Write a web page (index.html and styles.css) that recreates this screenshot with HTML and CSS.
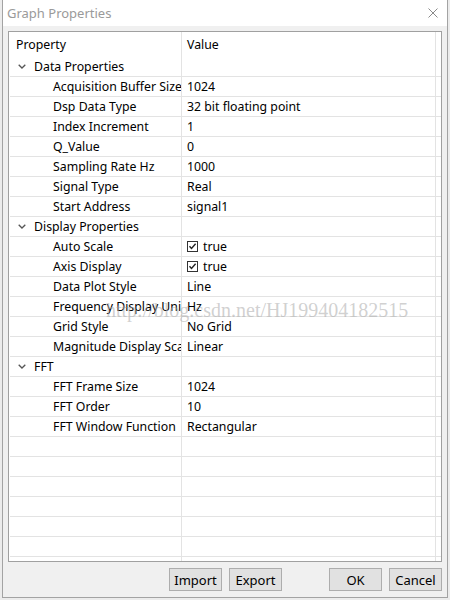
FILE: index.html
```html
<!doctype html>
<html lang="en">
  <head>
    <meta charset="UTF-8" />
    <title>Graph Properties</title>
    <link rel="stylesheet" href="styles.css">
  </head>
  <body>
    <div class="window">
      <div class="titlebar">
        <span class="title">Graph Properties</span>
        <svg class="close" width="10" height="10" viewBox="0 0 10 10">
          <path d="M0.5 0.5 L9.5 9.5 M9.5 0.5 L0.5 9.5" stroke="#8a8a8a" stroke-width="1" fill="none" />
        </svg>
      </div>

      <div class="content">
        <div class="grid">
          <div class="row head">
            <div class="cell name">Property</div>
            <div class="cell value">Value</div>
            <div class="cell fill"></div>
          </div>

          <!-- Data Properties -->
          <div class="row cat">
            <div class="cell name"><svg class="chev" width="8" height="5" viewBox="0 0 8 5"><path d="M0.7 0.7 L4 4 L7.3 0.7" stroke="#555" stroke-width="1.3" fill="none" /></svg>Data Properties</div>
            <div class="cell value"></div>
            <div class="cell fill"></div>
          </div>
          <div class="row"><div class="cell name">Acquisition Buffer Size</div><div class="cell value">1024</div><div class="cell fill"></div></div>
          <div class="row"><div class="cell name">Dsp Data Type</div><div class="cell value">32 bit floating point</div><div class="cell fill"></div></div>
          <div class="row"><div class="cell name">Index Increment</div><div class="cell value">1</div><div class="cell fill"></div></div>
          <div class="row"><div class="cell name">Q_Value</div><div class="cell value">0</div><div class="cell fill"></div></div>
          <div class="row"><div class="cell name">Sampling Rate Hz</div><div class="cell value">1000</div><div class="cell fill"></div></div>
          <div class="row"><div class="cell name">Signal Type</div><div class="cell value">Real</div><div class="cell fill"></div></div>
          <div class="row"><div class="cell name">Start Address</div><div class="cell value">signal1</div><div class="cell fill"></div></div>

          <!-- Display Properties -->
          <div class="row cat">
            <div class="cell name"><svg class="chev" width="8" height="5" viewBox="0 0 8 5"><path d="M0.7 0.7 L4 4 L7.3 0.7" stroke="#555" stroke-width="1.3" fill="none" /></svg>Display Properties</div>
            <div class="cell value"></div>
            <div class="cell fill"></div>
          </div>
          <div class="row">
            <div class="cell name">Auto Scale</div>
            <div class="cell value"><svg class="check" width="11" height="11" viewBox="0 0 11 11"><rect x="0.5" y="0.5" width="10" height="10" fill="#fff" stroke="#333" /><path d="M2.5 5.2 L4.5 7.4 L8.6 2.8" stroke="#222" stroke-width="1.4" fill="none" /></svg>true</div>
            <div class="cell fill"></div>
          </div>
          <div class="row">
            <div class="cell name">Axis Display</div>
            <div class="cell value"><svg class="check" width="11" height="11" viewBox="0 0 11 11"><rect x="0.5" y="0.5" width="10" height="10" fill="#fff" stroke="#333" /><path d="M2.5 5.2 L4.5 7.4 L8.6 2.8" stroke="#222" stroke-width="1.4" fill="none" /></svg>true</div>
            <div class="cell fill"></div>
          </div>
          <div class="row"><div class="cell name">Data Plot Style</div><div class="cell value">Line</div><div class="cell fill"></div></div>
          <div class="row"><div class="cell name">Frequency Display Unit</div><div class="cell value">Hz</div><div class="cell fill"></div></div>
          <div class="row"><div class="cell name">Grid Style</div><div class="cell value">No Grid</div><div class="cell fill"></div></div>
          <div class="row"><div class="cell name">Magnitude Display Scale</div><div class="cell value">Linear</div><div class="cell fill"></div></div>

          <!-- FFT -->
          <div class="row cat">
            <div class="cell name"><svg class="chev" width="8" height="5" viewBox="0 0 8 5"><path d="M0.7 0.7 L4 4 L7.3 0.7" stroke="#555" stroke-width="1.3" fill="none" /></svg>FFT</div>
            <div class="cell value"></div>
            <div class="cell fill"></div>
          </div>
          <div class="row"><div class="cell name">FFT Frame Size</div><div class="cell value">1024</div><div class="cell fill"></div></div>
          <div class="row"><div class="cell name">FFT Order</div><div class="cell value">10</div><div class="cell fill"></div></div>
          <div class="row"><div class="cell name">FFT Window Function</div><div class="cell value">Rectangular</div><div class="cell fill"></div></div>

          <!-- empty rows -->
          <div class="row"><div class="cell name"></div><div class="cell value"></div><div class="cell fill"></div></div>
          <div class="row"><div class="cell name"></div><div class="cell value"></div><div class="cell fill"></div></div>
          <div class="row"><div class="cell name"></div><div class="cell value"></div><div class="cell fill"></div></div>
          <div class="row"><div class="cell name"></div><div class="cell value"></div><div class="cell fill"></div></div>
          <div class="row"><div class="cell name"></div><div class="cell value"></div><div class="cell fill"></div></div>
          <div class="row"><div class="cell name"></div><div class="cell value"></div><div class="cell fill"></div></div>
          <div class="row"><div class="cell name"></div><div class="cell value"></div><div class="cell fill"></div></div>
        </div>

        <div class="buttons">
          <button class="btn">Import</button>
          <button class="btn">Export</button>
          <button class="btn ok">OK</button>
          <button class="btn">Cancel</button>
        </div>
      </div>

      <div class="watermark">http://blog.csdn.net/HJ199404182515</div>
    </div>
  </body>
</html>
```

FILE: styles.css
```css
* {
  margin: 0;
  padding: 0;
  box-sizing: border-box;
}

body {
  font-family: "Noto Sans", "Noto Sans CJK SC", sans-serif;
  font-size: 12.3px;
  color: #000;
  background: #ececec;
  width: 450px;
  height: 600px;
  overflow: hidden;
}

.window {
  position: relative;
  width: 446px;
  height: 598px;
  margin-left: 2px;
  border: 1px solid #a3a3a3;
  border-top: none;
  background: #f0f0f0;
}

.titlebar {
  height: 26px;
  background: #fff;
  display: flex;
  align-items: center;
  justify-content: space-between;
  padding: 0 9px 0 4px;
}

.title {
  font-size: 13px;
  color: #9a9a9a;
}

.close {
  display: block;
}

.content {
  padding: 5px 5px 0;
}

.grid {
  height: 531px;
  border: 1px solid #a0a0a0;
  background: #fff;
  padding-left: 1px;
  overflow: hidden;
}

.row {
  display: flex;
  height: 20px;
  border-bottom: 1px solid #e3e3e3;
}

.row.head {
  height: 25px;
  border-bottom: none;
}

.cell {
  display: flex;
  align-items: center;
  white-space: nowrap;
  overflow: hidden;
}

.cell.name {
  width: 172px;
  padding-left: 43px;
  border-right: 1px solid #e3e3e3;
}

.cell.value {
  width: 254px;
  padding-left: 5px;
  border-right: 1px solid #e3e3e3;
}

.cell.fill {
  width: 5px;
}

.head .cell.name {
  padding-left: 6px;
}

.cat .cell.name {
  padding-left: 8px;
}

.chev {
  margin-right: 8px;
  flex-shrink: 0;
}

.check {
  margin-right: 5px;
  flex-shrink: 0;
}

.buttons {
  display: flex;
  justify-content: flex-end;
  gap: 7px;
  margin-top: 6px;
}

.btn {
  width: 53px;
  height: 23px;
  background: #e1e1e1;
  border: 1px solid #adadad;
  font-family: inherit;
  font-size: 13px;
  color: #000;
}

.btn.ok {
  margin-left: 40px;
}

.watermark {
  position: absolute;
  left: 103px;
  top: 300px;
  font-family: "Liberation Serif", serif;
  font-size: 20px;
  line-height: 20px;
  color: rgba(170, 170, 170, 0.55);
  white-space: nowrap;
  pointer-events: none;
}
```
